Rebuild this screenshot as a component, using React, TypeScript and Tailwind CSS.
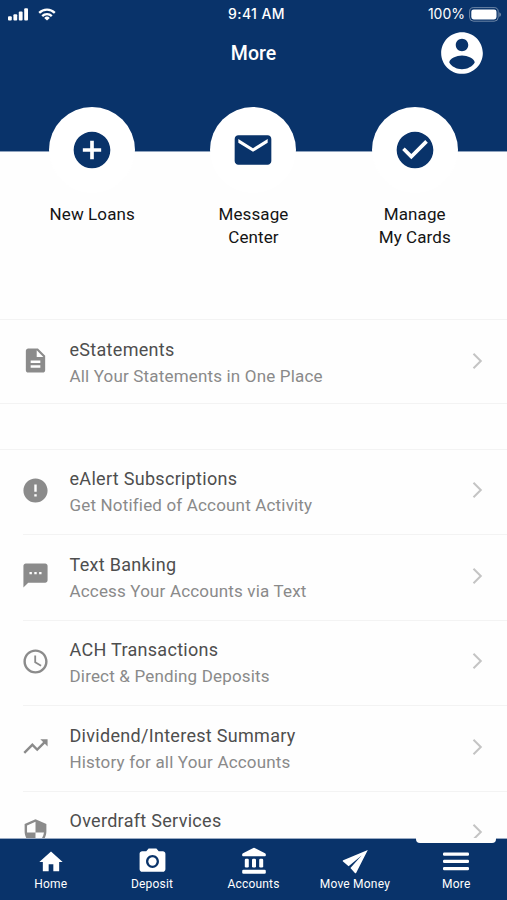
import type { ReactNode } from "react";
import {
  MdAccessTime,
  MdAddCircle,
  MdCheckCircle,
  MdDescription,
  MdEmail,
  MdError,
  MdHome,
  MdPhotoCamera,
  MdSecurity,
  MdTextsms,
  MdTrendingUp,
} from "react-icons/md";

function StatusBar() {
  return (
    <div className="grid h-7 grid-cols-3 items-center pr-[6px] pl-2 text-white">
      <div className="flex items-center gap-[9px]">
        <svg width="21" height="13" viewBox="0 0 21 13" fill="currentColor">
          <rect x="0" y="8.2" width="3.8" height="4.3" rx="1" />
          <rect x="5.4" y="6.3" width="3.8" height="6.2" rx="1" />
          <rect x="10.8" y="3.6" width="3.8" height="8.9" rx="1" />
          <rect x="16.2" y="0.3" width="3.8" height="12.2" rx="1" />
        </svg>
        <svg width="18" height="13" viewBox="0 0 18 13" fill="none" stroke="currentColor" strokeWidth="2.3">
          <path d="M1.2 4.9a11 11 0 0 1 15.6 0" />
          <path d="M4.2 8.1a6.8 6.8 0 0 1 9.6 0" />
          <path d="M9 12.5 6.2 9.9a4 4 0 0 1 5.6 0z" fill="currentColor" stroke="none" />
        </svg>
      </div>
      <p className="pl-[4px] text-center font-[Inter,sans-serif] text-[14px] leading-7 font-medium tracking-[0.4px] whitespace-nowrap">
        9:41 AM
      </p>
      <div className="flex items-center justify-end gap-1">
        <span className="font-[Inter,sans-serif] text-[14px] leading-7">100%</span>
        <svg width="32" height="15" viewBox="0 0 32 15" fill="currentColor">
          <rect x="0.6" y="0.6" width="28.6" height="13.6" rx="4" fill="none" stroke="currentColor" strokeOpacity="0.4" />
          <rect x="2.3" y="2.4" width="25.2" height="10" rx="2.4" />
          <path d="M30.4 5.2v4.6c.9-.4 1.4-1.3 1.4-2.3s-.5-1.9-1.4-2.3z" fillOpacity="0.5" />
        </svg>
      </div>
    </div>
  );
}

function AccountIcon() {
  return (
    <svg width="50" height="50" viewBox="0 0 24 24" fill="currentColor">
      <path d="M12 2C6.48 2 2 6.48 2 12s4.48 10 10 10 10-4.48 10-10S17.52 2 12 2zm0 3.200c1.66 0 3 1.34 3 3s-1.34 3-3 3-3-1.34-3-3 1.34-3 3-3zm0 14.600c-2.600 0-5-1.280-6.100-3.220.03-1.990 3.500-3.380 6.100-3.380 2.600 0 6.070 1.390 6.100 3.380-1.100 1.940-3.500 3.220-6.100 3.220z" />
    </svg>
  );
}

function BankIcon() {
  return (
    <svg width="28" height="28" viewBox="0 0 28 28" fill="currentColor">
      <path d="M13.3 1a1.6 1.6 0 0 1 1.4 0l10.3 5.200c.5.300.8.700.8 1.200v1c0 .5-.3.800-.8.800H3c-.5 0-.8-.3-.8-.8v-1c0-.5.3-.9.8-1.200z" />
      <rect x="4.8" y="11.8" width="4" height="8.7" rx="1.2" />
      <rect x="12" y="11.8" width="4" height="8.7" rx="1.2" />
      <rect x="19.2" y="11.8" width="4" height="8.7" rx="1.2" />
      <rect x="2.2" y="22.8" width="23.6" height="3.9" rx="1.3" />
    </svg>
  );
}

function PlaneIcon() {
  return (
    <svg width="28" height="28" viewBox="0 0 28 28" fill="currentColor">
      <path d="M26.8 3 2.2 13.300c-.6.300-.6.900-.2 1.300L7.600 19.300 20.600 8.600 9.400 21.100l4.500 4.900c.4.400.9.400 1.200-.1z" />
    </svg>
  );
}

function MenuIcon() {
  return (
    <svg width="26" height="28" viewBox="0 0 26 28" fill="currentColor">
      <rect y="5.500" width="26" height="3.300" rx="1.200" />
      <rect y="12.700" width="26" height="3.300" rx="1.200" />
      <rect y="19.900" width="26" height="3.300" rx="1.200" />
    </svg>
  );
}

function Shortcut({ icon, label }: { icon: ReactNode; label: ReactNode }) {
  return (
    <button className="flex w-[161.3px] flex-col items-center">
      <span className="flex size-[86px] items-center justify-center rounded-full bg-white text-[#09336a]">
        {icon}
      </span>
      <span className="mt-[10px] text-[17px] leading-[22.5px] tracking-[0.1px] text-[#141414]">{label}</span>
    </button>
  );
}

function Row({ icon, title, subtitle }: { icon: ReactNode; title: string; subtitle?: string }) {
  return (
    <li className="flex h-[85.5px] items-center pb-1">
      <span className="ml-[20.5px] flex w-[49px] shrink-0 text-[#8b8b8b]">{icon}</span>
      <div className="flex-1 pt-[4px]">
        <p className="text-[18px] leading-[26px] tracking-[0.3px] text-[#4e4e4e]">{title}</p>
        <p className="min-h-[26px] text-[17px] leading-[26px] tracking-[0.17px] text-[#8a8a8a]">{subtitle}</p>
      </div>
      <svg className="mr-[24px]" width="11" height="18" viewBox="0 0 11 18" fill="none" stroke="#c4c4c4" strokeWidth="2">
        <path d="m1.5 1.700 7.300 7.300-7.300 7.300" />
      </svg>
    </li>
  );
}

const rows = [
  { icon: <MdError size={29} />, title: "eAlert Subscriptions", subtitle: "Get Notified of Account Activity" },
  { icon: <MdTextsms size={29} />, title: "Text Banking", subtitle: "Access Your Accounts via Text" },
  { icon: <MdAccessTime size={29} />, title: "ACH Transactions", subtitle: "Direct & Pending Deposits" },
  { icon: <MdTrendingUp size={29} />, title: "Dividend/Interest Summary", subtitle: "History for all Your Accounts" },
  { icon: <MdSecurity size={29} />, title: "Overdraft Services" },
];

const tabs = [
  { icon: <MdHome size={28} className="mt-[2px]" />, label: "Home" },
  { icon: <MdPhotoCamera size={31} />, label: "Deposit" },
  { icon: <BankIcon />, label: "Accounts" },
  { icon: <PlaneIcon />, label: "Move Money" },
  { icon: <MenuIcon />, label: "More", active: true },
];

export default function App() {
  return (
    <div className="flex h-[900px] w-[507px] flex-col overflow-hidden bg-[#fefefe] font-[Roboto,sans-serif]">
      <header className="h-[152px] shrink-0 border-b border-[#8fa3be] bg-[#09336a] text-white">
        <StatusBar />
        <div className="grid h-12 grid-cols-[1fr_auto_1fr] items-center">
          <span />
          <h1 className="pt-[2px] text-[19.5px] font-medium">More</h1>
          <div className="flex justify-end pr-[20px]">
            <AccountIcon />
          </div>
        </div>
      </header>

      <div className="-mt-[45px] flex h-[212px] shrink-0 justify-center">
        <Shortcut icon={<MdAddCircle size={44} />} label="New Loans" />
        <Shortcut icon={<MdEmail size={44} />} label={<>Message<br />Center</>} />
        <Shortcut icon={<MdCheckCircle size={44} />} label={<>Manage<br />My Cards</>} />
      </div>

      <main className="min-h-0 flex-1 overflow-hidden">
        <ul className="h-[85px] border-y border-[#f3f3f3]">
          <Row icon={<MdDescription size={29} />} title="eStatements" subtitle="All Your Statements in One Place" />
        </ul>
        <ul className="mt-[44.5px] border-t border-[#f3f3f3]">
          {rows.map((row, i) => (
            <div key={row.title}>
              {i > 0 && <div className="-mt-px ml-[23px] h-px bg-[#f3f3f3]" />}
              <Row {...row} />
            </div>
          ))}
        </ul>
      </main>

      <nav className="flex h-[62px] shrink-0 border-t border-[#9aabc4] bg-[#09336a] text-white">
        {tabs.map((tab) => (
          <button key={tab.label} className="relative flex flex-1 flex-col items-center pt-[8px]">
            {tab.active && <span className="absolute -top-px h-[5px] w-[80px] rounded-b bg-[#fefefe]" />}
            <span className="flex h-[28px] items-center">{tab.icon}</span>
            <span className="text-[12px] leading-[19px] tracking-[0.2px]">{tab.label}</span>
          </button>
        ))}
      </nav>
    </div>
  );
}
